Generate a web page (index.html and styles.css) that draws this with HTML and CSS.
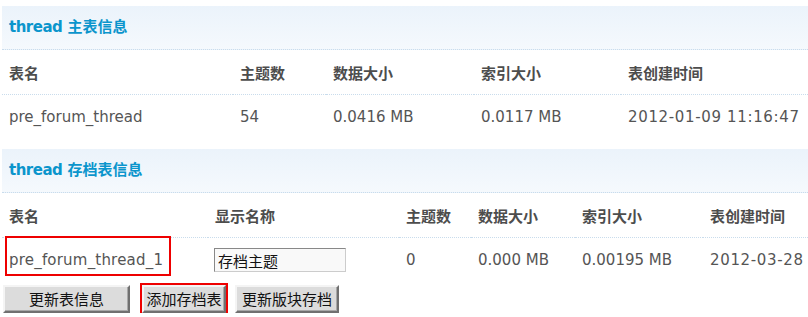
FILE: index.html
```html
<!DOCTYPE html>
<html lang="zh-CN">
<head>
<meta charset="utf-8">
<title>thread 分表信息</title>
<link rel="stylesheet" href="styles.css">
</head>
<body>
<div class="page">
  <h3 class="band"><span class="en">thread</span> 主表信息</h3>
  <table class="tb tb-main">
    <colgroup>
      <col class="m1"><col class="m2"><col class="m3"><col class="m4"><col class="m5">
    </colgroup>
    <tr class="head">
      <th>表名</th><th>主题数</th><th>数据大小</th><th>索引大小</th><th>表创建时间</th>
    </tr>
    <tr class="data">
      <td>pre_forum_thread</td><td>54</td><td>0.0416 MB</td><td>0.0117 MB</td><td class="date">2012-01-09 11:16:47</td>
    </tr>
  </table>

  <h3 class="band"><span class="en">thread</span> 存档表信息</h3>
  <table class="tb tb-arch">
    <colgroup>
      <col class="a1"><col class="a2"><col class="a3"><col class="a4"><col class="a5"><col class="a6">
    </colgroup>
    <tr class="head">
      <th>表名</th><th>显示名称</th><th>主题数</th><th>数据大小</th><th>索引大小</th><th>表创建时间</th>
    </tr>
    <tr class="data">
      <td><span class="marked">pre_forum_thread_1</span></td>
      <td><input class="name-input" type="text" value="存档主题"></td>
      <td>0</td><td>0.000 MB</td><td>0.00195 MB</td><td class="date">2012-03-28</td>
    </tr>
  </table>

  <div class="btn-row">
    <button class="btn btn-wide" type="button">更新表信息</button>
    <button class="btn btn-add" type="button">添加存档表</button>
    <button class="btn btn-sync" type="button">更新版块存档</button>
  </div>
</div>
</body>
</html>
```

FILE: styles.css
```css
html, body {
  margin: 0;
  padding: 0;
  background: #fff;
}

body {
  font-family: "DejaVu Sans", Verdana, "Noto Sans CJK SC", sans-serif;
  font-size: 15px;
  color: #555;
  overflow: hidden;
}

.page {
  padding: 6px 0 0 2px;
  width: 806px;
}

.band {
  margin: 0;
  height: 43px;
  line-height: 43px;
  padding-left: 7px;
  background: linear-gradient(#ebf3fb, #f5f9fd);
  border-bottom: 1px dotted #c9dcec;
  font-family: "DejaVu Sans", Verdana, "Noto Sans CJK SC", sans-serif;
  font-size: 15px;
  font-weight: bold;
  color: #0b95cc;
}

.band .en {
  letter-spacing: -0.5px;
}

.tb {
  width: 806px;
  border-collapse: collapse;
  table-layout: fixed;
}

.tb th,
.tb td {
  padding: 0 0 0 7px;
  text-align: left;
  white-space: nowrap;
  vertical-align: middle;
}

.tb th {
  font-family: "Noto Sans CJK SC", sans-serif;
  font-weight: bold;
  color: #4d4d4d;
  font-size: 15px;
}

.tb .head th {
  height: 44px;
  border-bottom: 1px dotted #c9dcec;
}

.tb .data td {
  height: 44px;
}

.tb-main {
  margin-bottom: 10px;
}

.tb .date {
  letter-spacing: 0.65px;
}

.m1 { width: 231px; }
.m2 { width: 93px; }
.m3 { width: 148px; }
.m4 { width: 147px; }
.m5 { width: 187px; }

.a1 { width: 206px; }
.a2 { width: 191px; }
.a3 { width: 72px; }
.a4 { width: 104px; }
.a5 { width: 128px; }
.a6 { width: 105px; }

.marked {
  position: relative;
  display: inline-block;
  line-height: 20px;
  letter-spacing: 0.2px;
}

.marked::after {
  content: "";
  position: absolute;
  left: -4px;
  top: -14px;
  width: 162px;
  height: 36px;
  border: 2px solid #ee0000;
}

.name-input {
  box-sizing: border-box;
  width: 132px;
  height: 24px;
  margin: 0 0 0 -1px;
  padding: 0 3px;
  font-family: "Noto Sans CJK SC", sans-serif;
  font-size: 15px;
  color: #111;
  background: #f9f9f9;
  border: 1px solid;
  border-color: #888 #ccc #ccc #888;
  vertical-align: middle;
}

.btn-row {
  display: flex;
  align-items: center;
  gap: 9px;
  margin-top: 3px;
  padding-left: 1px;
}

.btn {
  box-sizing: border-box;
  height: 28px;
  padding: 0 5px;
  font-family: "Noto Sans CJK SC", sans-serif;
  font-size: 15px;
  line-height: 24px;
  color: #111;
  background: #dcdcdc;
  border: 2px solid;
  border-color: #f4f4f4 #707070 #707070 #f4f4f4;
  box-shadow: inset -1px -1px 0 #a8a8a8;
  cursor: pointer;
}

.btn-wide {
  width: 127px;
}

.btn-add {
  width: 84px;
  padding: 0 2px;
  margin-left: 3px;
  outline: 2px solid #ee0000;
  outline-offset: 0;
}

.btn-sync {
  width: 104px;
}
```
